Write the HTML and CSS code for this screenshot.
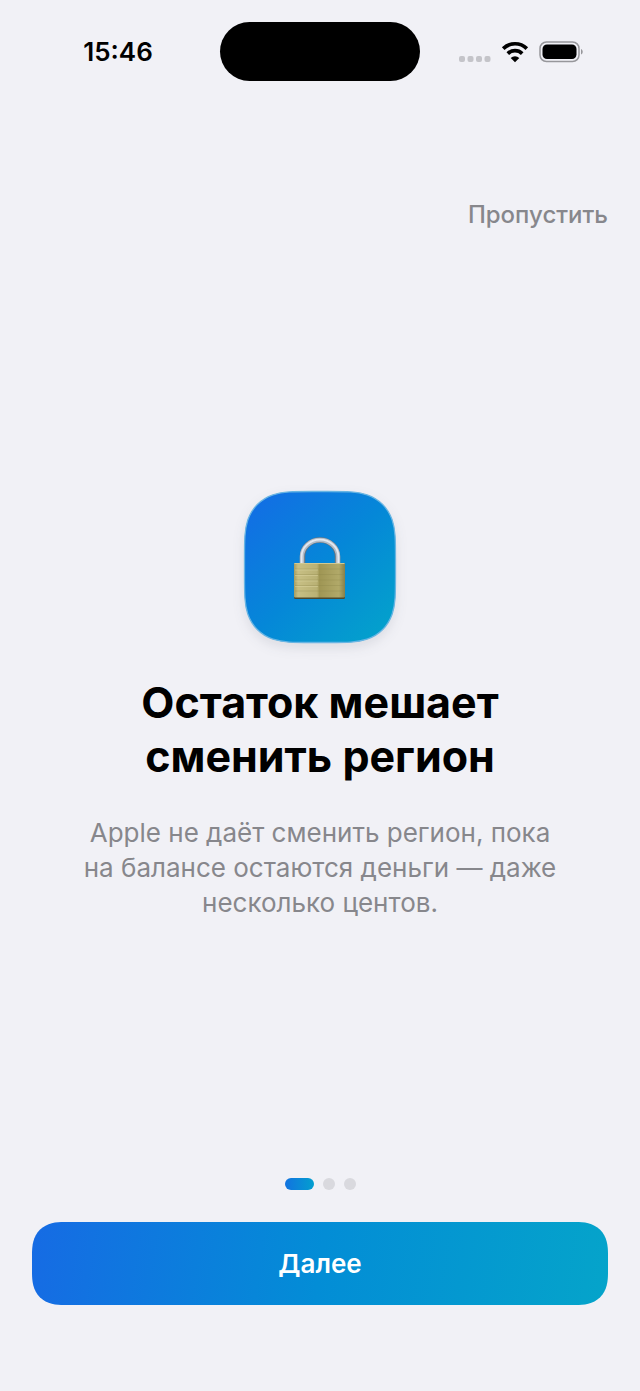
FILE: index.html
```html
<!DOCTYPE html>
<html lang="ru">
<head>
    <meta charset="UTF-8">
    <meta name="viewport" content="width=device-width, initial-scale=1.0">
    <title>Остаток мешает сменить регион</title>
    <link rel="stylesheet" href="styles.css">
</head>
<body>
    <header class="statusBar">
        <time class="clock">15:46</time>
        <div class="island"></div>
        <div class="indicators">
            <svg class="signal" width="32" height="22" viewBox="0 0 32 22" fill="#c4c4c9">
                <rect x="0" y="15" width="6" height="6" rx="2"/>
                <rect x="8.500" y="15" width="6" height="6" rx="2"/>
                <rect x="17" y="15" width="6" height="6" rx="2"/>
                <rect x="25.500" y="15" width="6" height="6" rx="2"/>
            </svg>
            <svg class="wifi" width="28" height="22" viewBox="0 0 28 22">
                <path d="M2.200 7.600a16.800 16.800 0 0 1 23.600 0M6.800 12.600a10.300 10.300 0 0 1 14.400 0" fill="none" stroke="#000" stroke-width="3.700"/>
                <path d="M14 21.300l-4.300-4.400a6.200 6.200 0 0 1 8.600 0z"/>
            </svg>
            <svg class="battery" width="44" height="22" viewBox="0 0 44 22">
                <rect x="1" y="1" width="39" height="19.500" rx="6.500" fill="none" stroke="#97979b" stroke-width="1.500"/>
                <rect x="3.500" y="3.500" width="34" height="14.500" rx="4.500"/>
                <path d="M42 8c2.300 1 2.300 4.600 0 5.600z" fill="#97979b"/>
            </svg>
        </div>
    </header>

    <nav class="topNav">
        <button type="button" class="skip">Пропустить</button>
    </nav>

    <main>
        <svg class="tile" width="152" height="152" viewBox="0 0 152 152">
            <defs>
                <linearGradient id="tileFill" x1="0" y1="0" x2="1" y2="1">
                    <stop offset="0" stop-color="#146be6"/>
                    <stop offset="0.5" stop-color="#0587d8"/>
                    <stop offset="1" stop-color="#03a5ca"/>
                </linearGradient>
                <linearGradient id="brass" x1="0" y1="0" x2="1" y2="0">
                    <stop offset="0" stop-color="#a69d61"/>
                    <stop offset="0.08" stop-color="#c7bf84"/>
                    <stop offset="0.45" stop-color="#b9b174"/>
                    <stop offset="0.5" stop-color="#9f9654"/>
                    <stop offset="0.88" stop-color="#b1a969"/>
                    <stop offset="1" stop-color="#86804a"/>
                </linearGradient>
            </defs>
            <path d="M68 .5H84C103 .5 113 .5 123 3.800 135 8 144 17 148.200 29 151.500 39 151.500 49 151.500 68V84C151.500 103 151.500 113 148.200 123 144 135 135 144 123 148.200 113 151.500 103 151.500 84 151.500H68C49 151.500 39 151.500 29 148.200 17 144 8 135 3.800 123 .5 113 .5 103 .5 84V68C.5 49 .5 39 3.800 29 8 17 17 8 29 3.800 39 .5 49 .5 68 .5z" fill="url(#tileFill)" stroke="#68b5e3" stroke-width="1.300"/>
            <!-- shackle -->
            <path d="M58.500 73V65.500a17.500 16.500 0 0 1 35 0V73" fill="none" stroke="#66747f" stroke-width="5.400"/>
            <path d="M58 73V65.500a18 16.500 0 0 1 36 0V73" fill="none" stroke="#b3bdc9" stroke-width="4.400"/>
            <path d="M57.600 72V65.500a18.400 16.800 0 0 1 36.800 0V72" fill="none" stroke="#e3e9f1" stroke-width="1.800"/>
            <!-- body -->
            <rect x="50" y="73" width="51" height="35" rx="1.500" fill="#4c4930"/>
            <rect x="50" y="72" width="51" height="34.500" rx="1" fill="url(#brass)"/>
            <path d="M51 78h49M51 83.500h49M51 89h49M51 94.500h49M51 100h49" stroke="#8c834a" stroke-opacity=".3" stroke-width="1"/>
            <path d="M51 79h23M51 84.500h23M51 90h23M51 95.500h23" stroke="#e4dda9" stroke-opacity=".4" stroke-width="1"/>
            <path d="M50.500 72.500h50" stroke="#d1c991" stroke-width="1"/>
        </svg>
        <h1>Остаток мешает сменить регион</h1>
        <p>Apple не даёт сменить регион, пока на балансе остаются деньги — даже несколько центов.</p>
    </main>

    <footer>
        <div class="dots">
            <span class="dot active"></span>
            <span class="dot"></span>
            <span class="dot"></span>
        </div>
        <button type="button" class="next">Далее</button>
    </footer>
</body>
</html>
```
FILE: styles.css
```css
* {
    box-sizing: border-box;
}

body {
    display: flex;
    flex-direction: column;
    min-height: 100vh;
    margin: 0;
    background-color: #f1f1f6;
    color: #000;
    font-family: Inter, "Liberation Sans", sans-serif;
}

button {
    border: none;
    font-family: inherit;
    cursor: pointer;
}

.statusBar {
    display: grid;
    grid-template-columns: 1fr 200px 1fr;
    align-items: center;
    padding-top: 22px;
}

.clock {
    padding-left: 16px;
    text-align: center;
    font-size: 26px;
    font-weight: 600;
}

.island {
    height: 59px;
    border-radius: 30px;
    background-color: #000;
}

.indicators {
    display: flex;
    align-items: center;
    justify-content: flex-end;
    gap: 10px;
    padding-right: 57px;
}

.topNav {
    display: flex;
    justify-content: flex-end;
    padding: 118px 32px 16px;
}

.skip {
    padding: 0;
    background: none;
    color: #87878c;
    font-size: 24px;
    font-weight: 500;
    line-height: 32px;
}

main {
    flex: 1;
    display: flex;
    flex-direction: column;
    align-items: center;
    justify-content: center;
    padding: 0 64px;
    text-align: center;
}

.tile {
    overflow: visible;
    filter: drop-shadow(0 5px 6px rgba(40, 50, 70, 0.1));
}

h1 {
    max-width: 400px;
    margin: 32px 0 0;
    font-size: 43px;
    font-weight: 700;
    line-height: 54px;
}

p {
    max-width: 480px;
    margin: 32px 0 0;
    color: #87878c;
    font-size: 26px;
    line-height: 35px;
}

footer {
    padding: 14px 32px 86px;
}

.dots {
    display: flex;
    justify-content: center;
    gap: 9px;
    margin-bottom: 32px;
}

.dot {
    width: 12px;
    height: 12px;
    border-radius: 6px;
    background-color: #d9d9de;
}

.dot.active {
    width: 29px;
    background: linear-gradient(90deg, #1273e0, #039fcf);
}

.next {
    display: block;
    width: 100%;
    padding: 24px;
    border-radius: 32px;
    corner-shape: superellipse(1.3);
    background: linear-gradient(98deg, #166be4, #038dd6 50%, #05a4ca);
    color: #fff;
    font-size: 26px;
    font-weight: 600;
    line-height: 35px;
}
```
